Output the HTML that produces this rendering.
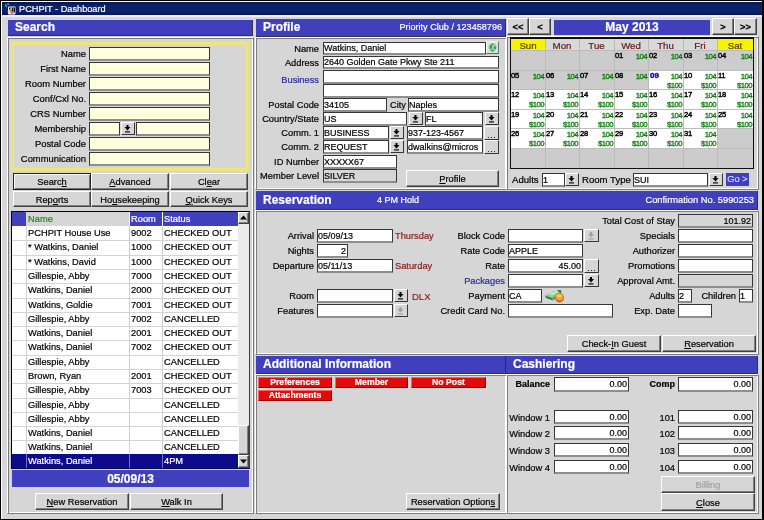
<!DOCTYPE html><html><head><meta charset="utf-8"><style>
html,body{margin:0;padding:0;width:764px;height:520px;overflow:hidden;background:#d6d6d6;font-family:"Liberation Sans", sans-serif;} body{will-change:transform;}
div{position:absolute;box-sizing:border-box;} .t{position:absolute;white-space:nowrap;font-family:"Liberation Sans",sans-serif;-webkit-text-stroke:0.2px currentColor;}
span.t{position:absolute;}
</style></head><body>
<div style="left:0px;top:0px;width:764px;height:520px;background:#000;"></div>
<div style="left:1px;top:1px;width:761px;height:518px;background:#fff;"></div>
<div style="left:2px;top:2px;width:760px;height:517px;background:#d6d6d6;"></div>
<div style="left:2px;top:2px;width:760px;height:13px;background:linear-gradient(#071650,#0b226c 30%,#0b236e 70%,#071650);"></div>
<svg style="position:absolute;left:0;top:0" width="20" height="16" viewBox="0 0 20 16"><rect x="8" y="6.5" width="7.5" height="8" rx="1" fill="#f4f4f4"/><path d="M9 7.5h2.5v1h-1.5v1h1.5v2h-2.5v-1h1.5v-1h-1.5z" fill="#111"/><path d="M12 7.5h3v5h-3z M13 8.5v1h1v-1z M13 10.5v1h1v-1z" fill="#111" fill-rule="evenodd"/><circle cx="9.3" cy="11.8" r="1.6" fill="#e8e070"/><circle cx="12" cy="12.5" r="1.6" fill="#d070a0"/><path d="M5 4l1.5 0.5l0.5 3l-1.5-1z" fill="#60b8a0"/><path d="M7 3.2l2 0.3l0.5 1.5l-2-0.3z" fill="#9080d8"/></svg>
<div class="t" style="left:19px;top:2px;height:14px;line-height:14px;font-size:9.2px;color:#fff;font-weight:normal;">PCHPIT - Dashboard</div>
<div style="left:2px;top:15px;width:760px;height:2px;background:#eeeef6;"></div>
<div style="left:8px;top:20px;width:245px;height:16px;background:#4040bf;border-right:1px solid #303040;border-bottom:1px solid #303040;"></div>
<div class="t" style="left:15px;top:19px;height:16px;line-height:16px;font-size:12px;color:#fff;font-weight:bold;">Search</div>
<div style="left:7px;top:37px;width:247px;height:477px;border:1px solid;border-color:#fff #7c7c7c #7c7c7c #fff;box-shadow:inset 1px 1px 0 #7c7c7c, inset -1px -1px 0 #fff;"></div>
<div style="left:11px;top:42px;width:238px;height:129px;border:3px solid #eee67c;"></div>
<div class="t" style="right:678px;top:47px;height:14px;line-height:14px;font-size:9.4px;color:#000;font-weight:normal;text-align:right;">Name</div>
<div style="left:89px;top:47px;width:121px;height:14px;background:#ffffe0;border-top:1px solid #363636;border-left:1px solid #363636;border-right:1px solid #363636;border-bottom:2px solid #8e8e8e;box-sizing:border-box;"></div>
<div class="t" style="right:678px;top:62px;height:14px;line-height:14px;font-size:9.4px;color:#000;font-weight:normal;text-align:right;">First Name</div>
<div style="left:89px;top:62px;width:121px;height:14px;background:#ffffe0;border-top:1px solid #363636;border-left:1px solid #363636;border-right:1px solid #363636;border-bottom:2px solid #8e8e8e;box-sizing:border-box;"></div>
<div class="t" style="right:678px;top:77px;height:14px;line-height:14px;font-size:9.4px;color:#000;font-weight:normal;text-align:right;">Room Number</div>
<div style="left:89px;top:77px;width:121px;height:14px;background:#ffffe0;border-top:1px solid #363636;border-left:1px solid #363636;border-right:1px solid #363636;border-bottom:2px solid #8e8e8e;box-sizing:border-box;"></div>
<div class="t" style="right:678px;top:92px;height:14px;line-height:14px;font-size:9.4px;color:#000;font-weight:normal;text-align:right;">Conf/Cxl No.</div>
<div style="left:89px;top:92px;width:121px;height:14px;background:#ffffe0;border-top:1px solid #363636;border-left:1px solid #363636;border-right:1px solid #363636;border-bottom:2px solid #8e8e8e;box-sizing:border-box;"></div>
<div class="t" style="right:678px;top:107px;height:14px;line-height:14px;font-size:9.4px;color:#000;font-weight:normal;text-align:right;">CRS Number</div>
<div style="left:89px;top:107px;width:121px;height:14px;background:#ffffe0;border-top:1px solid #363636;border-left:1px solid #363636;border-right:1px solid #363636;border-bottom:2px solid #8e8e8e;box-sizing:border-box;"></div>
<div class="t" style="right:678px;top:122px;height:14px;line-height:14px;font-size:9.4px;color:#000;font-weight:normal;text-align:right;">Membership</div>
<div style="left:89px;top:122px;width:31px;height:14px;background:#ffffe0;border-top:1px solid #363636;border-left:1px solid #363636;border-right:1px solid #363636;border-bottom:2px solid #8e8e8e;box-sizing:border-box;"></div>
<div style="left:121px;top:122px;width:14px;height:13px;background:#d6d6d6;box-sizing:border-box;border-top:1px solid #fff;border-left:1px solid #fff;border-right:1px solid #363636;border-bottom:1px solid #363636;"><div style="left:-1px;top:-1px;width:14px;height:13px"><svg width="14" height="14" style="position:absolute;left:0;top:0"><rect x="5.5" y="3" width="2" height="2" fill="#000"/><path d="M3.5 5 H9.5 L6.5 8.5z" fill="#000"/><rect x="4.0" y="9.2" width="5" height="1.4" fill="#000" opacity="0.8"/></svg></div></div>
<div style="left:136px;top:122px;width:74px;height:14px;background:#ffffe0;border-top:1px solid #363636;border-left:1px solid #363636;border-right:1px solid #363636;border-bottom:2px solid #8e8e8e;box-sizing:border-box;"></div>
<div class="t" style="right:678px;top:137px;height:14px;line-height:14px;font-size:9.4px;color:#000;font-weight:normal;text-align:right;">Postal Code</div>
<div style="left:89px;top:137px;width:121px;height:14px;background:#ffffe0;border-top:1px solid #363636;border-left:1px solid #363636;border-right:1px solid #363636;border-bottom:2px solid #8e8e8e;box-sizing:border-box;"></div>
<div class="t" style="right:678px;top:152px;height:14px;line-height:14px;font-size:9.4px;color:#000;font-weight:normal;text-align:right;">Communication</div>
<div style="left:89px;top:152px;width:121px;height:14px;background:#ffffe0;border-top:1px solid #363636;border-left:1px solid #363636;border-right:1px solid #363636;border-bottom:2px solid #8e8e8e;box-sizing:border-box;"></div>
<div style="left:13px;top:173px;width:78px;height:17px;background:#d6d6d6;box-sizing:border-box;border:1px solid #202020;box-shadow:inset 1px 1px 0 #fff, inset -1px -1px 0 #707070;"><div class="t" style="left:0;top:0;width:100%;height:100%;line-height:17px;text-align:center;font-size:9.3px;color:#000">Searc<u>h</u></div></div>
<div style="left:91px;top:173px;width:78px;height:17px;background:#d6d6d6;box-sizing:border-box;border-top:1px solid #fff;border-left:1px solid #fff;border-right:1px solid #404040;border-bottom:1px solid #404040;box-shadow:inset -1px -1px 0 #808080;"><div class="t" style="left:0;top:0;width:100%;height:100%;line-height:17px;text-align:center;font-size:9.3px;color:#000"><u>A</u>dvanced</div></div>
<div style="left:170px;top:173px;width:78px;height:17px;background:#d6d6d6;box-sizing:border-box;border-top:1px solid #fff;border-left:1px solid #fff;border-right:1px solid #404040;border-bottom:1px solid #404040;box-shadow:inset -1px -1px 0 #808080;"><div class="t" style="left:0;top:0;width:100%;height:100%;line-height:17px;text-align:center;font-size:9.3px;color:#000">Cl<u>e</u>ar</div></div>
<div style="left:13px;top:191px;width:78px;height:16px;background:#d6d6d6;box-sizing:border-box;border-top:1px solid #fff;border-left:1px solid #fff;border-right:1px solid #404040;border-bottom:1px solid #404040;box-shadow:inset -1px -1px 0 #808080;"><div class="t" style="left:0;top:0;width:100%;height:100%;line-height:16px;text-align:center;font-size:9.3px;color:#000">Rep<u>o</u>rts</div></div>
<div style="left:91px;top:191px;width:78px;height:16px;background:#d6d6d6;box-sizing:border-box;border-top:1px solid #fff;border-left:1px solid #fff;border-right:1px solid #404040;border-bottom:1px solid #404040;box-shadow:inset -1px -1px 0 #808080;"><div class="t" style="left:0;top:0;width:100%;height:100%;line-height:16px;text-align:center;font-size:9.3px;color:#000">Ho<u>u</u>sekeeping</div></div>
<div style="left:170px;top:191px;width:78px;height:16px;background:#d6d6d6;box-sizing:border-box;border-top:1px solid #fff;border-left:1px solid #fff;border-right:1px solid #404040;border-bottom:1px solid #404040;box-shadow:inset -1px -1px 0 #808080;"><div class="t" style="left:0;top:0;width:100%;height:100%;line-height:16px;text-align:center;font-size:9.3px;color:#000"><u>Q</u>uick Keys</div></div>
<div style="left:11px;top:211px;width:239px;height:258px;background:#fff;border:1px solid #000;border-right-color:#404040;border-bottom-color:#08084a;"></div>
<div style="left:12px;top:212px;width:14px;height:14px;background:#4040bf;"></div>
<div style="left:26px;top:212px;width:104px;height:14px;background:#d6d6d6;"></div>
<div style="left:130px;top:212px;width:108px;height:14px;background:#4040bf;"></div>
<div style="left:129px;top:212px;width:1px;height:14px;background:#fff;"></div>
<div style="left:162px;top:212px;width:1px;height:14px;background:#fff;"></div>
<div class="t" style="left:28px;top:212px;height:14px;line-height:14px;font-size:9.3px;color:#1c8a1c;font-weight:normal;">Name</div>
<div class="t" style="left:131px;top:212px;height:14px;line-height:14px;font-size:9.3px;color:#fff;font-weight:normal;">Room</div>
<div class="t" style="left:164px;top:212px;height:14px;line-height:14px;font-size:9.3px;color:#fff;font-weight:normal;">Status</div>
<div style="left:12px;top:240px;width:226px;height:1px;background:#d4d4d4;"></div>
<div class="t" style="left:28px;top:226px;height:14px;line-height:14px;font-size:9.3px;color:#000;font-weight:normal;">PCHPIT House Use</div>
<div class="t" style="left:131px;top:226px;height:14px;line-height:14px;font-size:9.3px;color:#000;font-weight:normal;">9002</div>
<div class="t" style="left:164px;top:226px;height:14px;line-height:14px;font-size:9.3px;color:#000;font-weight:normal;">CHECKED OUT</div>
<div style="left:12px;top:255px;width:226px;height:1px;background:#d4d4d4;"></div>
<div class="t" style="left:28px;top:240px;height:15px;line-height:15px;font-size:9.3px;color:#000;font-weight:normal;">* Watkins, Daniel</div>
<div class="t" style="left:131px;top:240px;height:15px;line-height:15px;font-size:9.3px;color:#000;font-weight:normal;">1000</div>
<div class="t" style="left:164px;top:240px;height:15px;line-height:15px;font-size:9.3px;color:#000;font-weight:normal;">CHECKED OUT</div>
<div style="left:12px;top:269px;width:226px;height:1px;background:#d4d4d4;"></div>
<div class="t" style="left:28px;top:255px;height:14px;line-height:14px;font-size:9.3px;color:#000;font-weight:normal;">* Watkins, David</div>
<div class="t" style="left:131px;top:255px;height:14px;line-height:14px;font-size:9.3px;color:#000;font-weight:normal;">1000</div>
<div class="t" style="left:164px;top:255px;height:14px;line-height:14px;font-size:9.3px;color:#000;font-weight:normal;">CHECKED OUT</div>
<div style="left:12px;top:283px;width:226px;height:1px;background:#d4d4d4;"></div>
<div class="t" style="left:28px;top:269px;height:14px;line-height:14px;font-size:9.3px;color:#000;font-weight:normal;">Gillespie, Abby</div>
<div class="t" style="left:131px;top:269px;height:14px;line-height:14px;font-size:9.3px;color:#000;font-weight:normal;">7000</div>
<div class="t" style="left:164px;top:269px;height:14px;line-height:14px;font-size:9.3px;color:#000;font-weight:normal;">CHECKED OUT</div>
<div style="left:12px;top:298px;width:226px;height:1px;background:#d4d4d4;"></div>
<div class="t" style="left:28px;top:283px;height:15px;line-height:15px;font-size:9.3px;color:#000;font-weight:normal;">Watkins, Daniel</div>
<div class="t" style="left:131px;top:283px;height:15px;line-height:15px;font-size:9.3px;color:#000;font-weight:normal;">2000</div>
<div class="t" style="left:164px;top:283px;height:15px;line-height:15px;font-size:9.3px;color:#000;font-weight:normal;">CHECKED OUT</div>
<div style="left:12px;top:312px;width:226px;height:1px;background:#d4d4d4;"></div>
<div class="t" style="left:28px;top:298px;height:14px;line-height:14px;font-size:9.3px;color:#000;font-weight:normal;">Watkins, Goldie</div>
<div class="t" style="left:131px;top:298px;height:14px;line-height:14px;font-size:9.3px;color:#000;font-weight:normal;">7001</div>
<div class="t" style="left:164px;top:298px;height:14px;line-height:14px;font-size:9.3px;color:#000;font-weight:normal;">CHECKED OUT</div>
<div style="left:12px;top:326px;width:226px;height:1px;background:#d4d4d4;"></div>
<div class="t" style="left:28px;top:312px;height:14px;line-height:14px;font-size:9.3px;color:#000;font-weight:normal;">Gillespie, Abby</div>
<div class="t" style="left:131px;top:312px;height:14px;line-height:14px;font-size:9.3px;color:#000;font-weight:normal;">7002</div>
<div class="t" style="left:164px;top:312px;height:14px;line-height:14px;font-size:9.3px;color:#000;font-weight:normal;">CANCELLED</div>
<div style="left:12px;top:340px;width:226px;height:1px;background:#d4d4d4;"></div>
<div class="t" style="left:28px;top:326px;height:14px;line-height:14px;font-size:9.3px;color:#000;font-weight:normal;">Watkins, Daniel</div>
<div class="t" style="left:131px;top:326px;height:14px;line-height:14px;font-size:9.3px;color:#000;font-weight:normal;">2001</div>
<div class="t" style="left:164px;top:326px;height:14px;line-height:14px;font-size:9.3px;color:#000;font-weight:normal;">CHECKED OUT</div>
<div style="left:12px;top:355px;width:226px;height:1px;background:#d4d4d4;"></div>
<div class="t" style="left:28px;top:340px;height:15px;line-height:15px;font-size:9.3px;color:#000;font-weight:normal;">Watkins, Daniel</div>
<div class="t" style="left:131px;top:340px;height:15px;line-height:15px;font-size:9.3px;color:#000;font-weight:normal;">7002</div>
<div class="t" style="left:164px;top:340px;height:15px;line-height:15px;font-size:9.3px;color:#000;font-weight:normal;">CHECKED OUT</div>
<div style="left:12px;top:369px;width:226px;height:1px;background:#d4d4d4;"></div>
<div class="t" style="left:28px;top:355px;height:14px;line-height:14px;font-size:9.3px;color:#000;font-weight:normal;">Gillespie, Abby</div>
<div class="t" style="left:131px;top:355px;height:14px;line-height:14px;font-size:9.3px;color:#000;font-weight:normal;"></div>
<div class="t" style="left:164px;top:355px;height:14px;line-height:14px;font-size:9.3px;color:#000;font-weight:normal;">CANCELLED</div>
<div style="left:12px;top:383px;width:226px;height:1px;background:#d4d4d4;"></div>
<div class="t" style="left:28px;top:369px;height:14px;line-height:14px;font-size:9.3px;color:#000;font-weight:normal;">Brown, Ryan</div>
<div class="t" style="left:131px;top:369px;height:14px;line-height:14px;font-size:9.3px;color:#000;font-weight:normal;">2001</div>
<div class="t" style="left:164px;top:369px;height:14px;line-height:14px;font-size:9.3px;color:#000;font-weight:normal;">CHECKED OUT</div>
<div style="left:12px;top:398px;width:226px;height:1px;background:#d4d4d4;"></div>
<div class="t" style="left:28px;top:383px;height:15px;line-height:15px;font-size:9.3px;color:#000;font-weight:normal;">Gillespie, Abby</div>
<div class="t" style="left:131px;top:383px;height:15px;line-height:15px;font-size:9.3px;color:#000;font-weight:normal;">7003</div>
<div class="t" style="left:164px;top:383px;height:15px;line-height:15px;font-size:9.3px;color:#000;font-weight:normal;">CHECKED OUT</div>
<div style="left:12px;top:412px;width:226px;height:1px;background:#d4d4d4;"></div>
<div class="t" style="left:28px;top:398px;height:14px;line-height:14px;font-size:9.3px;color:#000;font-weight:normal;">Gillespie, Abby</div>
<div class="t" style="left:131px;top:398px;height:14px;line-height:14px;font-size:9.3px;color:#000;font-weight:normal;"></div>
<div class="t" style="left:164px;top:398px;height:14px;line-height:14px;font-size:9.3px;color:#000;font-weight:normal;">CANCELLED</div>
<div style="left:12px;top:426px;width:226px;height:1px;background:#d4d4d4;"></div>
<div class="t" style="left:28px;top:412px;height:14px;line-height:14px;font-size:9.3px;color:#000;font-weight:normal;">Gillespie, Abby</div>
<div class="t" style="left:131px;top:412px;height:14px;line-height:14px;font-size:9.3px;color:#000;font-weight:normal;"></div>
<div class="t" style="left:164px;top:412px;height:14px;line-height:14px;font-size:9.3px;color:#000;font-weight:normal;">CANCELLED</div>
<div style="left:12px;top:440px;width:226px;height:1px;background:#d4d4d4;"></div>
<div class="t" style="left:28px;top:426px;height:14px;line-height:14px;font-size:9.3px;color:#000;font-weight:normal;">Watkins, Daniel</div>
<div class="t" style="left:131px;top:426px;height:14px;line-height:14px;font-size:9.3px;color:#000;font-weight:normal;"></div>
<div class="t" style="left:164px;top:426px;height:14px;line-height:14px;font-size:9.3px;color:#000;font-weight:normal;">CANCELLED</div>
<div style="left:12px;top:455px;width:226px;height:1px;background:#d4d4d4;"></div>
<div class="t" style="left:28px;top:440px;height:15px;line-height:15px;font-size:9.3px;color:#000;font-weight:normal;">Watkins, Daniel</div>
<div class="t" style="left:131px;top:440px;height:15px;line-height:15px;font-size:9.3px;color:#000;font-weight:normal;"></div>
<div class="t" style="left:164px;top:440px;height:15px;line-height:15px;font-size:9.3px;color:#000;font-weight:normal;">CANCELLED</div>
<div style="left:26px;top:226px;width:1px;height:229px;background:#d0d0d0;"></div>
<div style="left:129px;top:226px;width:1px;height:229px;background:#d0d0d0;"></div>
<div style="left:162px;top:226px;width:1px;height:229px;background:#d0d0d0;"></div>
<div style="left:12px;top:454px;width:226px;height:14px;background:#0b0b8c;"></div>
<div style="left:26px;top:454px;width:1px;height:14px;background:#7070d0;"></div>
<div style="left:129px;top:454px;width:1px;height:14px;background:#7070d0;"></div>
<div style="left:162px;top:454px;width:1px;height:14px;background:#7070d0;"></div>
<div class="t" style="left:28px;top:455px;height:13px;line-height:13px;font-size:9.3px;color:#fff;font-weight:normal;">Watkins, Daniel</div>
<div class="t" style="left:164px;top:455px;height:13px;line-height:13px;font-size:9.3px;color:#fff;font-weight:normal;">4PM</div>
<div style="left:238px;top:212px;width:11px;height:256px;background:#ebebeb;"></div>
<div style="left:238px;top:212px;width:11px;height:12px;background:#d6d6d6;box-sizing:border-box;border-top:1px solid #fff;border-left:1px solid #fff;border-right:1px solid #404040;border-bottom:1px solid #404040;box-shadow:inset -1px -1px 0 #808080;"></div>
<svg style="position:absolute;left:240px;top:215px" width="7" height="5"><path d="M3.5 0.5L7 4.5H0z" fill="#000"/></svg>
<div style="left:238px;top:425px;width:11px;height:30px;background:#d6d6d6;box-sizing:border-box;border-top:1px solid #fff;border-left:1px solid #fff;border-right:1px solid #404040;border-bottom:1px solid #404040;box-shadow:inset -1px -1px 0 #808080;"></div>
<div style="left:238px;top:455px;width:11px;height:13px;background:#d6d6d6;box-sizing:border-box;border-top:1px solid #fff;border-left:1px solid #fff;border-right:1px solid #404040;border-bottom:1px solid #404040;box-shadow:inset -1px -1px 0 #808080;"></div>
<svg style="position:absolute;left:240px;top:459px" width="7" height="5"><path d="M0 0.5H7L3.5 4.5z" fill="#000"/></svg>
<div style="left:12px;top:470px;width:237px;height:17px;background:#4040bf;"></div>
<div class="t" style="left:12px;top:471px;width:237px;height:17px;line-height:17px;font-size:12px;color:#fff;font-weight:bold;text-align:center;">05/09/13</div>
<div style="left:35px;top:493px;width:94px;height:17px;background:#d6d6d6;box-sizing:border-box;border-top:1px solid #fff;border-left:1px solid #fff;border-right:1px solid #404040;border-bottom:1px solid #404040;box-shadow:inset -1px -1px 0 #808080;"><div class="t" style="left:0;top:0;width:100%;height:100%;line-height:17px;text-align:center;font-size:9.3px;color:#000"><u>N</u>ew Reservation</div></div>
<div style="left:130px;top:493px;width:93px;height:17px;background:#d6d6d6;box-sizing:border-box;border-top:1px solid #fff;border-left:1px solid #fff;border-right:1px solid #404040;border-bottom:1px solid #404040;box-shadow:inset -1px -1px 0 #808080;"><div class="t" style="left:0;top:0;width:100%;height:100%;line-height:17px;text-align:center;font-size:9.3px;color:#000"><u>W</u>alk In</div></div>
<div style="left:256px;top:19px;width:250px;height:18px;background:#4040bf;border-right:1px solid #303040;border-bottom:1px solid #303040;"></div>
<div class="t" style="left:263px;top:18px;height:18px;line-height:18px;font-size:12px;color:#fff;font-weight:bold;">Profile</div>
<div class="t" style="right:262px;top:18px;height:18px;line-height:18px;font-size:9.1px;color:#fff;font-weight:normal;text-align:right;">Priority Club / 123458796</div>
<div style="left:255px;top:37px;width:252px;height:153px;border:1px solid;border-color:#fff #7c7c7c #7c7c7c #fff;box-shadow:inset 1px 1px 0 #7c7c7c, inset -1px -1px 0 #fff;"></div>
<div class="t" style="right:445px;top:43px;height:13px;line-height:13px;font-size:9.3px;color:#000;font-weight:normal;text-align:right;">Name</div>
<div class="t" style="right:445px;top:57px;height:13px;line-height:13px;font-size:9.3px;color:#000;font-weight:normal;text-align:right;">Address</div>
<div class="t" style="right:445px;top:74px;height:13px;line-height:13px;font-size:9.3px;color:#2a2aa0;font-weight:normal;text-align:right;">Business</div>
<div class="t" style="right:445px;top:99px;height:13px;line-height:13px;font-size:9.3px;color:#000;font-weight:normal;text-align:right;">Postal Code</div>
<div class="t" style="right:445px;top:113px;height:13px;line-height:13px;font-size:9.3px;color:#000;font-weight:normal;text-align:right;">Country/State</div>
<div class="t" style="right:445px;top:127px;height:13px;line-height:13px;font-size:9.3px;color:#000;font-weight:normal;text-align:right;">Comm. 1</div>
<div class="t" style="right:445px;top:141px;height:13px;line-height:13px;font-size:9.3px;color:#000;font-weight:normal;text-align:right;">Comm. 2</div>
<div class="t" style="right:445px;top:156px;height:13px;line-height:13px;font-size:9.3px;color:#000;font-weight:normal;text-align:right;">ID Number</div>
<div class="t" style="right:445px;top:170px;height:13px;line-height:13px;font-size:9.3px;color:#000;font-weight:normal;text-align:right;">Member Level</div>
<div style="left:323px;top:42px;width:163px;height:13px;background:#fff;border-top:1px solid #363636;border-left:1px solid #363636;border-right:1px solid #363636;border-bottom:2px solid #8e8e8e;box-sizing:border-box;"><span class="t" style="left:0px;top:0px;line-height:11px;font-size:9px;color:#000">Watkins, Daniel</span></div>
<div style="left:486px;top:41px;width:13px;height:13px;background:#dfe3df;border-top:1px solid #f4f4f4;border-left:1px solid #f4f4f4;border-right:1px solid #707070;border-bottom:1px solid #606060;"></div>
<svg style="position:absolute;left:487px;top:42px" width="11" height="11" viewBox="0 0 11 11"><circle cx="5.5" cy="5.5" r="4.2" fill="#8ad8a0"/><rect x="3.2" y="3.2" width="1.3" height="3.5" fill="#1c6a30"/><rect x="7.3" y="4.5" width="1.3" height="2.5" fill="#1c6a30"/><rect x="4.7" y="1.8" width="1.6" height="1.2" fill="#2c7a40"/><rect x="4.5" y="8" width="2" height="1.2" fill="#1c6a30"/></svg>
<div style="left:323px;top:56px;width:176px;height:13px;background:#fff;border-top:1px solid #363636;border-left:1px solid #363636;border-right:1px solid #363636;border-bottom:2px solid #8e8e8e;box-sizing:border-box;"><span class="t" style="left:0px;top:0px;line-height:11px;font-size:9px;color:#000">2640 Golden Gate Pkwy Ste 211</span></div>
<div style="left:323px;top:70px;width:176px;height:14px;background:#fff;border-top:1px solid #363636;border-left:1px solid #363636;border-right:1px solid #363636;border-bottom:2px solid #8e8e8e;box-sizing:border-box;"></div>
<div style="left:323px;top:84px;width:176px;height:14px;background:#fff;border-top:1px solid #363636;border-left:1px solid #363636;border-right:1px solid #363636;border-bottom:2px solid #8e8e8e;box-sizing:border-box;"></div>
<div style="left:323px;top:98px;width:64px;height:14px;background:#fff;border-top:1px solid #363636;border-left:1px solid #363636;border-right:1px solid #363636;border-bottom:2px solid #8e8e8e;box-sizing:border-box;"><span class="t" style="left:0px;top:0px;line-height:12px;font-size:9px;color:#000">34105</span></div>
<div class="t" style="right:358px;top:99px;height:13px;line-height:13px;font-size:9.3px;color:#000;font-weight:normal;text-align:right;">City</div>
<div style="left:408px;top:98px;width:91px;height:14px;background:#fff;border-top:1px solid #363636;border-left:1px solid #363636;border-right:1px solid #363636;border-bottom:2px solid #8e8e8e;box-sizing:border-box;"><span class="t" style="left:0px;top:0px;line-height:12px;font-size:9px;color:#000">Naples</span></div>
<div style="left:323px;top:112px;width:84px;height:14px;background:#fff;border-top:1px solid #363636;border-left:1px solid #363636;border-right:1px solid #363636;border-bottom:2px solid #8e8e8e;box-sizing:border-box;"><span class="t" style="left:0px;top:0px;line-height:12px;font-size:9px;color:#000">US</span></div>
<div style="left:409px;top:112px;width:14px;height:13px;background:#d6d6d6;box-sizing:border-box;border-top:1px solid #fff;border-left:1px solid #fff;border-right:1px solid #363636;border-bottom:1px solid #363636;"><div style="left:-1px;top:-1px;width:14px;height:13px"><svg width="14" height="14" style="position:absolute;left:0;top:0"><rect x="5.5" y="3" width="2" height="2" fill="#000"/><path d="M3.5 5 H9.5 L6.5 8.5z" fill="#000"/><rect x="4.0" y="9.2" width="5" height="1.4" fill="#000" opacity="0.8"/></svg></div></div>
<div style="left:425px;top:112px;width:58px;height:14px;background:#fff;border-top:1px solid #363636;border-left:1px solid #363636;border-right:1px solid #363636;border-bottom:2px solid #8e8e8e;box-sizing:border-box;"><span class="t" style="left:0px;top:0px;line-height:12px;font-size:9px;color:#000">FL</span></div>
<div style="left:485px;top:112px;width:14px;height:13px;background:#d6d6d6;box-sizing:border-box;border-top:1px solid #fff;border-left:1px solid #fff;border-right:1px solid #363636;border-bottom:1px solid #363636;"><div style="left:-1px;top:-1px;width:14px;height:13px"><svg width="14" height="14" style="position:absolute;left:0;top:0"><rect x="5.5" y="3" width="2" height="2" fill="#000"/><path d="M3.5 5 H9.5 L6.5 8.5z" fill="#000"/><rect x="4.0" y="9.2" width="5" height="1.4" fill="#000" opacity="0.8"/></svg></div></div>
<div style="left:323px;top:126px;width:66px;height:14px;background:#fff;border-top:1px solid #363636;border-left:1px solid #363636;border-right:1px solid #363636;border-bottom:2px solid #8e8e8e;box-sizing:border-box;"><span class="t" style="left:0px;top:0px;line-height:12px;font-size:9px;color:#000">BUSINESS</span></div>
<div style="left:390px;top:126px;width:14px;height:13px;background:#d6d6d6;box-sizing:border-box;border-top:1px solid #fff;border-left:1px solid #fff;border-right:1px solid #363636;border-bottom:1px solid #363636;"><div style="left:-1px;top:-1px;width:14px;height:13px"><svg width="14" height="14" style="position:absolute;left:0;top:0"><rect x="5.5" y="3" width="2" height="2" fill="#000"/><path d="M3.5 5 H9.5 L6.5 8.5z" fill="#000"/><rect x="4.0" y="9.2" width="5" height="1.4" fill="#000" opacity="0.8"/></svg></div></div>
<div style="left:407px;top:126px;width:76px;height:14px;background:#fff;border-top:1px solid #363636;border-left:1px solid #363636;border-right:1px solid #363636;border-bottom:2px solid #8e8e8e;box-sizing:border-box;"><span class="t" style="left:0px;top:0px;line-height:12px;font-size:9px;color:#000">937-123-4567</span></div>
<div style="left:484px;top:126px;width:15px;height:14px;background:#d6d6d6;box-sizing:border-box;border-top:1px solid #fff;border-left:1px solid #fff;border-right:1px solid #363636;border-bottom:1px solid #363636;"><svg width="15" height="13" style="position:absolute;left:-1px;top:-1px"><rect x="4" y="11" width="1" height="1" fill="#222"/><rect x="7" y="11" width="1" height="1" fill="#222"/><rect x="10" y="11" width="1" height="1" fill="#222"/></svg></div>
<div style="left:323px;top:140px;width:66px;height:14px;background:#fff;border-top:1px solid #363636;border-left:1px solid #363636;border-right:1px solid #363636;border-bottom:2px solid #8e8e8e;box-sizing:border-box;"><span class="t" style="left:0px;top:0px;line-height:12px;font-size:9px;color:#000">REQUEST</span></div>
<div style="left:390px;top:140px;width:14px;height:13px;background:#d6d6d6;box-sizing:border-box;border-top:1px solid #fff;border-left:1px solid #fff;border-right:1px solid #363636;border-bottom:1px solid #363636;"><div style="left:-1px;top:-1px;width:14px;height:13px"><svg width="14" height="14" style="position:absolute;left:0;top:0"><rect x="5.5" y="3" width="2" height="2" fill="#000"/><path d="M3.5 5 H9.5 L6.5 8.5z" fill="#000"/><rect x="4.0" y="9.2" width="5" height="1.4" fill="#000" opacity="0.8"/></svg></div></div>
<div style="left:407px;top:140px;width:76px;height:14px;background:#fff;border-top:1px solid #363636;border-left:1px solid #363636;border-right:1px solid #363636;border-bottom:2px solid #8e8e8e;box-sizing:border-box;"><span class="t" style="left:0px;top:0px;line-height:12px;font-size:9px;color:#000">dwalkins@micros</span></div>
<div style="left:484px;top:140px;width:15px;height:14px;background:#d6d6d6;box-sizing:border-box;border-top:1px solid #fff;border-left:1px solid #fff;border-right:1px solid #363636;border-bottom:1px solid #363636;"><svg width="15" height="13" style="position:absolute;left:-1px;top:-1px"><rect x="4" y="11" width="1" height="1" fill="#222"/><rect x="7" y="11" width="1" height="1" fill="#222"/><rect x="10" y="11" width="1" height="1" fill="#222"/></svg></div>
<div style="left:323px;top:155px;width:74px;height:14px;background:#fff;border-top:1px solid #363636;border-left:1px solid #363636;border-right:1px solid #363636;border-bottom:2px solid #8e8e8e;box-sizing:border-box;"><span class="t" style="left:0px;top:0px;line-height:12px;font-size:9px;color:#000">XXXXX67</span></div>
<div style="left:323px;top:169px;width:74px;height:14px;background:#d6d6d6;border-top:1px solid #363636;border-left:1px solid #363636;border-right:1px solid #363636;border-bottom:2px solid #8e8e8e;box-sizing:border-box;"><span class="t" style="left:0px;top:0px;line-height:12px;font-size:9px;color:#000">SILVER</span></div>
<div style="left:406px;top:170px;width:93px;height:17px;background:#d6d6d6;box-sizing:border-box;border-top:1px solid #fff;border-left:1px solid #fff;border-right:1px solid #404040;border-bottom:1px solid #404040;box-shadow:inset -1px -1px 0 #808080;"><div class="t" style="left:0;top:0;width:100%;height:100%;line-height:17px;text-align:center;font-size:9.3px;color:#000"><u>P</u>rofile</div></div>
<div style="left:507px;top:18px;width:22px;height:17px;background:#d6d6d6;box-sizing:border-box;border-top:1px solid #fff;border-left:1px solid #fff;border-right:1px solid #404040;border-bottom:1px solid #404040;box-shadow:inset -1px -1px 0 #808080;"><div class="t" style="left:0;top:0;width:100%;height:100%;line-height:17px;text-align:center;font-size:9.3px;color:#000"><b>&lt;&lt;</b></div></div>
<div style="left:529px;top:18px;width:22px;height:17px;background:#d6d6d6;box-sizing:border-box;border-top:1px solid #fff;border-left:1px solid #fff;border-right:1px solid #404040;border-bottom:1px solid #404040;box-shadow:inset -1px -1px 0 #808080;"><div class="t" style="left:0;top:0;width:100%;height:100%;line-height:17px;text-align:center;font-size:9.3px;color:#000"><b>&lt;</b></div></div>
<div style="left:554px;top:20px;width:156px;height:15px;background:#4040bf;"></div>
<div class="t" style="left:554px;top:20px;width:156px;height:15px;line-height:15px;font-size:12px;color:#fff;font-weight:bold;text-align:center;">May 2013</div>
<div style="left:712px;top:18px;width:22px;height:17px;background:#d6d6d6;box-sizing:border-box;border-top:1px solid #fff;border-left:1px solid #fff;border-right:1px solid #404040;border-bottom:1px solid #404040;box-shadow:inset -1px -1px 0 #808080;"><div class="t" style="left:0;top:0;width:100%;height:100%;line-height:17px;text-align:center;font-size:9.3px;color:#000"><b>&gt;</b></div></div>
<div style="left:734px;top:18px;width:23px;height:17px;background:#d6d6d6;box-sizing:border-box;border-top:1px solid #fff;border-left:1px solid #fff;border-right:1px solid #404040;border-bottom:1px solid #404040;box-shadow:inset -1px -1px 0 #808080;"><div class="t" style="left:0;top:0;width:100%;height:100%;line-height:17px;text-align:center;font-size:9.3px;color:#000"><b>&gt;&gt;</b></div></div>
<div style="left:506px;top:36px;width:253px;height:154px;border:1px solid;border-color:#fff #7c7c7c #7c7c7c #fff;box-shadow:inset 1px 1px 0 #7c7c7c, inset -1px -1px 0 #fff;"></div>
<div style="left:510px;top:37px;width:244px;height:132px;background:#fff;border:2px solid #101010;border-top-width:2px;border-right-width:1px;border-left-width:1px;border-bottom-width:1px;"></div>
<div style="left:511px;top:39px;width:34px;height:11px;background:#f8f400;"></div>
<div class="t" style="left:511px;top:40px;width:34px;height:11px;line-height:11px;font-size:9.7px;color:#5a3c00;font-weight:normal;text-align:center;">Sun</div>
<div style="left:545px;top:39px;width:34px;height:11px;background:#d8d8d8;"></div>
<div class="t" style="left:545px;top:40px;width:34px;height:11px;line-height:11px;font-size:9.7px;color:#6a1414;font-weight:normal;text-align:center;">Mon</div>
<div style="left:579px;top:39px;width:35px;height:11px;background:#d8d8d8;"></div>
<div class="t" style="left:579px;top:40px;width:35px;height:11px;line-height:11px;font-size:9.7px;color:#6a1414;font-weight:normal;text-align:center;">Tue</div>
<div style="left:614px;top:39px;width:34px;height:11px;background:#d8d8d8;"></div>
<div class="t" style="left:614px;top:40px;width:34px;height:11px;line-height:11px;font-size:9.7px;color:#6a1414;font-weight:normal;text-align:center;">Wed</div>
<div style="left:648px;top:39px;width:35px;height:11px;background:#d8d8d8;"></div>
<div class="t" style="left:648px;top:40px;width:35px;height:11px;line-height:11px;font-size:9.7px;color:#6a1414;font-weight:normal;text-align:center;">Thu</div>
<div style="left:683px;top:39px;width:34px;height:11px;background:#d8d8d8;"></div>
<div class="t" style="left:683px;top:40px;width:34px;height:11px;line-height:11px;font-size:9.7px;color:#6a1414;font-weight:normal;text-align:center;">Fri</div>
<div style="left:717px;top:39px;width:36px;height:11px;background:#f8f400;"></div>
<div class="t" style="left:717px;top:40px;width:36px;height:11px;line-height:11px;font-size:9.7px;color:#5a3c00;font-weight:normal;text-align:center;">Sat</div>
<div style="left:511px;top:50px;width:34px;height:20px;background:#cccccc;"></div>
<div style="left:545px;top:50px;width:34px;height:20px;background:#cccccc;"></div>
<div style="left:579px;top:50px;width:35px;height:20px;background:#cccccc;"></div>
<div style="left:614px;top:50px;width:34px;height:20px;background:#cccccc;"></div>
<div style="left:648px;top:50px;width:35px;height:20px;background:#cccccc;"></div>
<div style="left:683px;top:50px;width:34px;height:20px;background:#cccccc;"></div>
<div style="left:717px;top:50px;width:36px;height:20px;background:#cccccc;"></div>
<div style="left:511px;top:70px;width:34px;height:19px;background:#cccccc;"></div>
<div style="left:545px;top:70px;width:34px;height:19px;background:#cccccc;"></div>
<div style="left:579px;top:70px;width:35px;height:19px;background:#cccccc;"></div>
<div style="left:614px;top:70px;width:34px;height:19px;background:#cccccc;"></div>
<div style="left:648px;top:70px;width:35px;height:19px;background:#fff;"></div>
<div style="left:683px;top:70px;width:34px;height:19px;background:#fff;"></div>
<div style="left:717px;top:70px;width:36px;height:19px;background:#fff;"></div>
<div style="left:511px;top:89px;width:34px;height:20px;background:#fff;"></div>
<div style="left:545px;top:89px;width:34px;height:20px;background:#fff;"></div>
<div style="left:579px;top:89px;width:35px;height:20px;background:#fff;"></div>
<div style="left:614px;top:89px;width:34px;height:20px;background:#fff;"></div>
<div style="left:648px;top:89px;width:35px;height:20px;background:#fff;"></div>
<div style="left:683px;top:89px;width:34px;height:20px;background:#fff;"></div>
<div style="left:717px;top:89px;width:36px;height:20px;background:#fff;"></div>
<div style="left:511px;top:109px;width:34px;height:19px;background:#fff;"></div>
<div style="left:545px;top:109px;width:34px;height:19px;background:#fff;"></div>
<div style="left:579px;top:109px;width:35px;height:19px;background:#fff;"></div>
<div style="left:614px;top:109px;width:34px;height:19px;background:#fff;"></div>
<div style="left:648px;top:109px;width:35px;height:19px;background:#fff;"></div>
<div style="left:683px;top:109px;width:34px;height:19px;background:#fff;"></div>
<div style="left:717px;top:109px;width:36px;height:19px;background:#fff;"></div>
<div style="left:511px;top:128px;width:34px;height:20px;background:#fff;"></div>
<div style="left:545px;top:128px;width:34px;height:20px;background:#fff;"></div>
<div style="left:579px;top:128px;width:35px;height:20px;background:#fff;"></div>
<div style="left:614px;top:128px;width:34px;height:20px;background:#fff;"></div>
<div style="left:648px;top:128px;width:35px;height:20px;background:#fff;"></div>
<div style="left:683px;top:128px;width:34px;height:20px;background:#fff;"></div>
<div style="left:717px;top:128px;width:36px;height:20px;background:#cccccc;"></div>
<div style="left:511px;top:148px;width:34px;height:20px;background:#cccccc;"></div>
<div style="left:545px;top:148px;width:34px;height:20px;background:#cccccc;"></div>
<div style="left:579px;top:148px;width:35px;height:20px;background:#cccccc;"></div>
<div style="left:614px;top:148px;width:34px;height:20px;background:#cccccc;"></div>
<div style="left:648px;top:148px;width:35px;height:20px;background:#cccccc;"></div>
<div style="left:683px;top:148px;width:34px;height:20px;background:#cccccc;"></div>
<div style="left:717px;top:148px;width:36px;height:20px;background:#cccccc;"></div>
<div style="left:545px;top:39px;width:1px;height:129px;background:#bababa;"></div>
<div style="left:579px;top:39px;width:1px;height:129px;background:#bababa;"></div>
<div style="left:614px;top:39px;width:1px;height:129px;background:#bababa;"></div>
<div style="left:648px;top:39px;width:1px;height:129px;background:#bababa;"></div>
<div style="left:683px;top:39px;width:1px;height:129px;background:#bababa;"></div>
<div style="left:717px;top:39px;width:1px;height:129px;background:#bababa;"></div>
<div style="left:511px;top:50px;width:242px;height:1px;background:#bcbcbc;"></div>
<div style="left:511px;top:70px;width:242px;height:1px;background:#bcbcbc;"></div>
<div style="left:511px;top:89px;width:242px;height:1px;background:#bcbcbc;"></div>
<div style="left:511px;top:109px;width:242px;height:1px;background:#bcbcbc;"></div>
<div style="left:511px;top:128px;width:242px;height:1px;background:#bcbcbc;"></div>
<div style="left:511px;top:148px;width:242px;height:1px;background:#bcbcbc;"></div>
<div class="t" style="left:615px;top:51px;height:9px;line-height:9px;font-size:7.6px;color:#000;font-weight:normal;-webkit-text-stroke:0.45px #000;letter-spacing:-0.3px;">01</div>
<div class="t" style="right:117px;top:52px;height:10px;line-height:10px;font-size:7.8px;color:#067a06;font-weight:normal;text-align:right;letter-spacing:-0.6px;-webkit-text-stroke:0.28px #067a06;">104</div>
<div class="t" style="left:649px;top:51px;height:9px;line-height:9px;font-size:7.6px;color:#000;font-weight:normal;-webkit-text-stroke:0.45px #000;letter-spacing:-0.3px;">02</div>
<div class="t" style="right:82px;top:52px;height:10px;line-height:10px;font-size:7.8px;color:#067a06;font-weight:normal;text-align:right;letter-spacing:-0.6px;-webkit-text-stroke:0.28px #067a06;">104</div>
<div class="t" style="left:684px;top:51px;height:9px;line-height:9px;font-size:7.6px;color:#000;font-weight:normal;-webkit-text-stroke:0.45px #000;letter-spacing:-0.3px;">03</div>
<div class="t" style="right:48px;top:52px;height:10px;line-height:10px;font-size:7.8px;color:#067a06;font-weight:normal;text-align:right;letter-spacing:-0.6px;-webkit-text-stroke:0.28px #067a06;">104</div>
<div class="t" style="left:718px;top:51px;height:9px;line-height:9px;font-size:7.6px;color:#000;font-weight:normal;-webkit-text-stroke:0.45px #000;letter-spacing:-0.3px;">04</div>
<div class="t" style="right:12px;top:52px;height:10px;line-height:10px;font-size:7.8px;color:#067a06;font-weight:normal;text-align:right;letter-spacing:-0.6px;-webkit-text-stroke:0.28px #067a06;">104</div>
<div class="t" style="left:511px;top:71px;height:9px;line-height:9px;font-size:7.6px;color:#000;font-weight:normal;-webkit-text-stroke:0.45px #000;letter-spacing:-0.3px;">05</div>
<div class="t" style="right:220px;top:72px;height:10px;line-height:10px;font-size:7.8px;color:#067a06;font-weight:normal;text-align:right;letter-spacing:-0.6px;-webkit-text-stroke:0.28px #067a06;">104</div>
<div class="t" style="left:546px;top:71px;height:9px;line-height:9px;font-size:7.6px;color:#000;font-weight:normal;-webkit-text-stroke:0.45px #000;letter-spacing:-0.3px;">06</div>
<div class="t" style="right:186px;top:72px;height:10px;line-height:10px;font-size:7.8px;color:#067a06;font-weight:normal;text-align:right;letter-spacing:-0.6px;-webkit-text-stroke:0.28px #067a06;">104</div>
<div class="t" style="left:580px;top:71px;height:9px;line-height:9px;font-size:7.6px;color:#000;font-weight:normal;-webkit-text-stroke:0.45px #000;letter-spacing:-0.3px;">07</div>
<div class="t" style="right:151px;top:72px;height:10px;line-height:10px;font-size:7.8px;color:#067a06;font-weight:normal;text-align:right;letter-spacing:-0.6px;-webkit-text-stroke:0.28px #067a06;">104</div>
<div class="t" style="left:615px;top:71px;height:9px;line-height:9px;font-size:7.6px;color:#000;font-weight:normal;-webkit-text-stroke:0.45px #000;letter-spacing:-0.3px;">08</div>
<div class="t" style="right:117px;top:72px;height:10px;line-height:10px;font-size:7.8px;color:#067a06;font-weight:normal;text-align:right;letter-spacing:-0.6px;-webkit-text-stroke:0.28px #067a06;">104</div>
<div class="t" style="left:650px;top:71px;height:10px;line-height:10px;font-size:8px;color:#0a0ab8;font-weight:bold;-webkit-text-stroke:0.45px #0a0ab8;">09</div>
<div class="t" style="right:82px;top:72px;height:10px;line-height:10px;font-size:7.8px;color:#067a06;font-weight:normal;text-align:right;letter-spacing:-0.6px;-webkit-text-stroke:0.28px #067a06;">104</div>
<div class="t" style="right:82px;top:81px;height:10px;line-height:10px;font-size:7.8px;color:#067a06;font-weight:normal;text-align:right;letter-spacing:-0.6px;-webkit-text-stroke:0.28px #067a06;">$100</div>
<div class="t" style="left:684px;top:71px;height:9px;line-height:9px;font-size:7.6px;color:#000;font-weight:normal;-webkit-text-stroke:0.45px #000;letter-spacing:-0.3px;">10</div>
<div class="t" style="right:48px;top:72px;height:10px;line-height:10px;font-size:7.8px;color:#067a06;font-weight:normal;text-align:right;letter-spacing:-0.6px;-webkit-text-stroke:0.28px #067a06;">104</div>
<div class="t" style="right:48px;top:81px;height:10px;line-height:10px;font-size:7.8px;color:#067a06;font-weight:normal;text-align:right;letter-spacing:-0.6px;-webkit-text-stroke:0.28px #067a06;">$100</div>
<div class="t" style="left:718px;top:71px;height:9px;line-height:9px;font-size:7.6px;color:#000;font-weight:normal;-webkit-text-stroke:0.45px #000;letter-spacing:-0.3px;">11</div>
<div class="t" style="right:12px;top:72px;height:10px;line-height:10px;font-size:7.8px;color:#067a06;font-weight:normal;text-align:right;letter-spacing:-0.6px;-webkit-text-stroke:0.28px #067a06;">104</div>
<div class="t" style="right:12px;top:81px;height:10px;line-height:10px;font-size:7.8px;color:#067a06;font-weight:normal;text-align:right;letter-spacing:-0.6px;-webkit-text-stroke:0.28px #067a06;">$100</div>
<div class="t" style="left:511px;top:90px;height:9px;line-height:9px;font-size:7.6px;color:#000;font-weight:normal;-webkit-text-stroke:0.45px #000;letter-spacing:-0.3px;">12</div>
<div class="t" style="right:220px;top:91px;height:10px;line-height:10px;font-size:7.8px;color:#067a06;font-weight:normal;text-align:right;letter-spacing:-0.6px;-webkit-text-stroke:0.28px #067a06;">104</div>
<div class="t" style="right:220px;top:100px;height:10px;line-height:10px;font-size:7.8px;color:#067a06;font-weight:normal;text-align:right;letter-spacing:-0.6px;-webkit-text-stroke:0.28px #067a06;">$100</div>
<div class="t" style="left:546px;top:90px;height:9px;line-height:9px;font-size:7.6px;color:#000;font-weight:normal;-webkit-text-stroke:0.45px #000;letter-spacing:-0.3px;">13</div>
<div class="t" style="right:186px;top:91px;height:10px;line-height:10px;font-size:7.8px;color:#067a06;font-weight:normal;text-align:right;letter-spacing:-0.6px;-webkit-text-stroke:0.28px #067a06;">104</div>
<div class="t" style="right:186px;top:100px;height:10px;line-height:10px;font-size:7.8px;color:#067a06;font-weight:normal;text-align:right;letter-spacing:-0.6px;-webkit-text-stroke:0.28px #067a06;">$100</div>
<div class="t" style="left:580px;top:90px;height:9px;line-height:9px;font-size:7.6px;color:#000;font-weight:normal;-webkit-text-stroke:0.45px #000;letter-spacing:-0.3px;">14</div>
<div class="t" style="right:151px;top:91px;height:10px;line-height:10px;font-size:7.8px;color:#067a06;font-weight:normal;text-align:right;letter-spacing:-0.6px;-webkit-text-stroke:0.28px #067a06;">104</div>
<div class="t" style="right:151px;top:100px;height:10px;line-height:10px;font-size:7.8px;color:#067a06;font-weight:normal;text-align:right;letter-spacing:-0.6px;-webkit-text-stroke:0.28px #067a06;">$100</div>
<div class="t" style="left:615px;top:90px;height:9px;line-height:9px;font-size:7.6px;color:#000;font-weight:normal;-webkit-text-stroke:0.45px #000;letter-spacing:-0.3px;">15</div>
<div class="t" style="right:117px;top:91px;height:10px;line-height:10px;font-size:7.8px;color:#067a06;font-weight:normal;text-align:right;letter-spacing:-0.6px;-webkit-text-stroke:0.28px #067a06;">104</div>
<div class="t" style="right:117px;top:100px;height:10px;line-height:10px;font-size:7.8px;color:#067a06;font-weight:normal;text-align:right;letter-spacing:-0.6px;-webkit-text-stroke:0.28px #067a06;">$100</div>
<div class="t" style="left:649px;top:90px;height:9px;line-height:9px;font-size:7.6px;color:#000;font-weight:normal;-webkit-text-stroke:0.45px #000;letter-spacing:-0.3px;">16</div>
<div class="t" style="right:82px;top:91px;height:10px;line-height:10px;font-size:7.8px;color:#067a06;font-weight:normal;text-align:right;letter-spacing:-0.6px;-webkit-text-stroke:0.28px #067a06;">104</div>
<div class="t" style="right:82px;top:100px;height:10px;line-height:10px;font-size:7.8px;color:#067a06;font-weight:normal;text-align:right;letter-spacing:-0.6px;-webkit-text-stroke:0.28px #067a06;">$100</div>
<div class="t" style="left:684px;top:90px;height:9px;line-height:9px;font-size:7.6px;color:#000;font-weight:normal;-webkit-text-stroke:0.45px #000;letter-spacing:-0.3px;">17</div>
<div class="t" style="right:48px;top:91px;height:10px;line-height:10px;font-size:7.8px;color:#067a06;font-weight:normal;text-align:right;letter-spacing:-0.6px;-webkit-text-stroke:0.28px #067a06;">104</div>
<div class="t" style="right:48px;top:100px;height:10px;line-height:10px;font-size:7.8px;color:#067a06;font-weight:normal;text-align:right;letter-spacing:-0.6px;-webkit-text-stroke:0.28px #067a06;">$100</div>
<div class="t" style="left:718px;top:90px;height:9px;line-height:9px;font-size:7.6px;color:#000;font-weight:normal;-webkit-text-stroke:0.45px #000;letter-spacing:-0.3px;">18</div>
<div class="t" style="right:12px;top:91px;height:10px;line-height:10px;font-size:7.8px;color:#067a06;font-weight:normal;text-align:right;letter-spacing:-0.6px;-webkit-text-stroke:0.28px #067a06;">104</div>
<div class="t" style="right:12px;top:100px;height:10px;line-height:10px;font-size:7.8px;color:#067a06;font-weight:normal;text-align:right;letter-spacing:-0.6px;-webkit-text-stroke:0.28px #067a06;">$100</div>
<div class="t" style="left:511px;top:110px;height:9px;line-height:9px;font-size:7.6px;color:#000;font-weight:normal;-webkit-text-stroke:0.45px #000;letter-spacing:-0.3px;">19</div>
<div class="t" style="right:220px;top:111px;height:10px;line-height:10px;font-size:7.8px;color:#067a06;font-weight:normal;text-align:right;letter-spacing:-0.6px;-webkit-text-stroke:0.28px #067a06;">104</div>
<div class="t" style="right:220px;top:120px;height:10px;line-height:10px;font-size:7.8px;color:#067a06;font-weight:normal;text-align:right;letter-spacing:-0.6px;-webkit-text-stroke:0.28px #067a06;">$100</div>
<div class="t" style="left:546px;top:110px;height:9px;line-height:9px;font-size:7.6px;color:#000;font-weight:normal;-webkit-text-stroke:0.45px #000;letter-spacing:-0.3px;">20</div>
<div class="t" style="right:186px;top:111px;height:10px;line-height:10px;font-size:7.8px;color:#067a06;font-weight:normal;text-align:right;letter-spacing:-0.6px;-webkit-text-stroke:0.28px #067a06;">104</div>
<div class="t" style="right:186px;top:120px;height:10px;line-height:10px;font-size:7.8px;color:#067a06;font-weight:normal;text-align:right;letter-spacing:-0.6px;-webkit-text-stroke:0.28px #067a06;">$100</div>
<div class="t" style="left:580px;top:110px;height:9px;line-height:9px;font-size:7.6px;color:#000;font-weight:normal;-webkit-text-stroke:0.45px #000;letter-spacing:-0.3px;">21</div>
<div class="t" style="right:151px;top:111px;height:10px;line-height:10px;font-size:7.8px;color:#067a06;font-weight:normal;text-align:right;letter-spacing:-0.6px;-webkit-text-stroke:0.28px #067a06;">104</div>
<div class="t" style="right:151px;top:120px;height:10px;line-height:10px;font-size:7.8px;color:#067a06;font-weight:normal;text-align:right;letter-spacing:-0.6px;-webkit-text-stroke:0.28px #067a06;">$100</div>
<div class="t" style="left:615px;top:110px;height:9px;line-height:9px;font-size:7.6px;color:#000;font-weight:normal;-webkit-text-stroke:0.45px #000;letter-spacing:-0.3px;">22</div>
<div class="t" style="right:117px;top:111px;height:10px;line-height:10px;font-size:7.8px;color:#067a06;font-weight:normal;text-align:right;letter-spacing:-0.6px;-webkit-text-stroke:0.28px #067a06;">104</div>
<div class="t" style="right:117px;top:120px;height:10px;line-height:10px;font-size:7.8px;color:#067a06;font-weight:normal;text-align:right;letter-spacing:-0.6px;-webkit-text-stroke:0.28px #067a06;">$100</div>
<div class="t" style="left:649px;top:110px;height:9px;line-height:9px;font-size:7.6px;color:#000;font-weight:normal;-webkit-text-stroke:0.45px #000;letter-spacing:-0.3px;">23</div>
<div class="t" style="right:82px;top:111px;height:10px;line-height:10px;font-size:7.8px;color:#067a06;font-weight:normal;text-align:right;letter-spacing:-0.6px;-webkit-text-stroke:0.28px #067a06;">104</div>
<div class="t" style="right:82px;top:120px;height:10px;line-height:10px;font-size:7.8px;color:#067a06;font-weight:normal;text-align:right;letter-spacing:-0.6px;-webkit-text-stroke:0.28px #067a06;">$100</div>
<div class="t" style="left:684px;top:110px;height:9px;line-height:9px;font-size:7.6px;color:#000;font-weight:normal;-webkit-text-stroke:0.45px #000;letter-spacing:-0.3px;">24</div>
<div class="t" style="right:48px;top:111px;height:10px;line-height:10px;font-size:7.8px;color:#067a06;font-weight:normal;text-align:right;letter-spacing:-0.6px;-webkit-text-stroke:0.28px #067a06;">104</div>
<div class="t" style="right:48px;top:120px;height:10px;line-height:10px;font-size:7.8px;color:#067a06;font-weight:normal;text-align:right;letter-spacing:-0.6px;-webkit-text-stroke:0.28px #067a06;">$100</div>
<div class="t" style="left:718px;top:110px;height:9px;line-height:9px;font-size:7.6px;color:#000;font-weight:normal;-webkit-text-stroke:0.45px #000;letter-spacing:-0.3px;">25</div>
<div class="t" style="right:12px;top:111px;height:10px;line-height:10px;font-size:7.8px;color:#067a06;font-weight:normal;text-align:right;letter-spacing:-0.6px;-webkit-text-stroke:0.28px #067a06;">104</div>
<div class="t" style="right:12px;top:120px;height:10px;line-height:10px;font-size:7.8px;color:#067a06;font-weight:normal;text-align:right;letter-spacing:-0.6px;-webkit-text-stroke:0.28px #067a06;">$100</div>
<div class="t" style="left:511px;top:129px;height:9px;line-height:9px;font-size:7.6px;color:#000;font-weight:normal;-webkit-text-stroke:0.45px #000;letter-spacing:-0.3px;">26</div>
<div class="t" style="right:220px;top:130px;height:10px;line-height:10px;font-size:7.8px;color:#067a06;font-weight:normal;text-align:right;letter-spacing:-0.6px;-webkit-text-stroke:0.28px #067a06;">104</div>
<div class="t" style="right:220px;top:139px;height:10px;line-height:10px;font-size:7.8px;color:#067a06;font-weight:normal;text-align:right;letter-spacing:-0.6px;-webkit-text-stroke:0.28px #067a06;">$100</div>
<div class="t" style="left:546px;top:129px;height:9px;line-height:9px;font-size:7.6px;color:#000;font-weight:normal;-webkit-text-stroke:0.45px #000;letter-spacing:-0.3px;">27</div>
<div class="t" style="right:186px;top:130px;height:10px;line-height:10px;font-size:7.8px;color:#067a06;font-weight:normal;text-align:right;letter-spacing:-0.6px;-webkit-text-stroke:0.28px #067a06;">104</div>
<div class="t" style="right:186px;top:139px;height:10px;line-height:10px;font-size:7.8px;color:#067a06;font-weight:normal;text-align:right;letter-spacing:-0.6px;-webkit-text-stroke:0.28px #067a06;">$100</div>
<div class="t" style="left:580px;top:129px;height:9px;line-height:9px;font-size:7.6px;color:#000;font-weight:normal;-webkit-text-stroke:0.45px #000;letter-spacing:-0.3px;">28</div>
<div class="t" style="right:151px;top:130px;height:10px;line-height:10px;font-size:7.8px;color:#067a06;font-weight:normal;text-align:right;letter-spacing:-0.6px;-webkit-text-stroke:0.28px #067a06;">104</div>
<div class="t" style="right:151px;top:139px;height:10px;line-height:10px;font-size:7.8px;color:#067a06;font-weight:normal;text-align:right;letter-spacing:-0.6px;-webkit-text-stroke:0.28px #067a06;">$100</div>
<div class="t" style="left:615px;top:129px;height:9px;line-height:9px;font-size:7.6px;color:#000;font-weight:normal;-webkit-text-stroke:0.45px #000;letter-spacing:-0.3px;">29</div>
<div class="t" style="right:117px;top:130px;height:10px;line-height:10px;font-size:7.8px;color:#067a06;font-weight:normal;text-align:right;letter-spacing:-0.6px;-webkit-text-stroke:0.28px #067a06;">104</div>
<div class="t" style="right:117px;top:139px;height:10px;line-height:10px;font-size:7.8px;color:#067a06;font-weight:normal;text-align:right;letter-spacing:-0.6px;-webkit-text-stroke:0.28px #067a06;">$100</div>
<div class="t" style="left:649px;top:129px;height:9px;line-height:9px;font-size:7.6px;color:#000;font-weight:normal;-webkit-text-stroke:0.45px #000;letter-spacing:-0.3px;">30</div>
<div class="t" style="right:82px;top:130px;height:10px;line-height:10px;font-size:7.8px;color:#067a06;font-weight:normal;text-align:right;letter-spacing:-0.6px;-webkit-text-stroke:0.28px #067a06;">104</div>
<div class="t" style="right:82px;top:139px;height:10px;line-height:10px;font-size:7.8px;color:#067a06;font-weight:normal;text-align:right;letter-spacing:-0.6px;-webkit-text-stroke:0.28px #067a06;">$100</div>
<div class="t" style="left:684px;top:129px;height:9px;line-height:9px;font-size:7.6px;color:#000;font-weight:normal;-webkit-text-stroke:0.45px #000;letter-spacing:-0.3px;">31</div>
<div class="t" style="right:48px;top:130px;height:10px;line-height:10px;font-size:7.8px;color:#067a06;font-weight:normal;text-align:right;letter-spacing:-0.6px;-webkit-text-stroke:0.28px #067a06;">104</div>
<div class="t" style="right:48px;top:139px;height:10px;line-height:10px;font-size:7.8px;color:#067a06;font-weight:normal;text-align:right;letter-spacing:-0.6px;-webkit-text-stroke:0.28px #067a06;">$100</div>
<div class="t" style="left:512px;top:173px;height:14px;line-height:14px;font-size:9.6px;color:#000;font-weight:normal;">Adults</div>
<div style="left:542px;top:173px;width:23px;height:14px;background:#fff;border-top:1px solid #363636;border-left:1px solid #363636;border-right:1px solid #363636;border-bottom:2px solid #8e8e8e;box-sizing:border-box;"><span class="t" style="left:0px;top:0px;line-height:12px;font-size:9px;color:#000">1</span></div>
<div style="left:565px;top:173px;width:14px;height:13px;background:#d6d6d6;box-sizing:border-box;border-top:1px solid #fff;border-left:1px solid #fff;border-right:1px solid #363636;border-bottom:1px solid #363636;"><div style="left:-1px;top:-1px;width:14px;height:13px"><svg width="14" height="14" style="position:absolute;left:0;top:0"><rect x="5.5" y="3" width="2" height="2" fill="#000"/><path d="M3.5 5 H9.5 L6.5 8.5z" fill="#000"/><rect x="4.0" y="9.2" width="5" height="1.4" fill="#000" opacity="0.8"/></svg></div></div>
<div class="t" style="left:582px;top:173px;height:14px;line-height:14px;font-size:9.6px;color:#000;font-weight:normal;">Room Type</div>
<div style="left:633px;top:173px;width:75px;height:14px;background:#fff;border-top:1px solid #363636;border-left:1px solid #363636;border-right:1px solid #363636;border-bottom:2px solid #8e8e8e;box-sizing:border-box;"><span class="t" style="left:0px;top:0px;line-height:12px;font-size:9px;color:#000">SUI</span></div>
<div style="left:709px;top:173px;width:14px;height:13px;background:#d6d6d6;box-sizing:border-box;border-top:1px solid #fff;border-left:1px solid #fff;border-right:1px solid #363636;border-bottom:1px solid #363636;"><div style="left:-1px;top:-1px;width:14px;height:13px"><svg width="14" height="14" style="position:absolute;left:0;top:0"><rect x="5.5" y="3" width="2" height="2" fill="#000"/><path d="M3.5 5 H9.5 L6.5 8.5z" fill="#000"/><rect x="4.0" y="9.2" width="5" height="1.4" fill="#000" opacity="0.8"/></svg></div></div>
<div style="left:726px;top:173px;width:23px;height:13px;background:#4040bf;"></div>
<div class="t" style="left:726px;top:173px;width:23px;height:13px;line-height:13px;font-size:9.3px;color:#d8d8ff;font-weight:normal;text-align:center;">Go &gt;</div>
<div style="left:256px;top:191px;width:502px;height:19px;background:#4040bf;border-right:1px solid #303040;border-bottom:1px solid #303040;"></div>
<div class="t" style="left:263px;top:191px;height:19px;line-height:19px;font-size:12px;color:#fff;font-weight:bold;">Reservation</div>
<div class="t" style="left:377px;top:192px;height:17px;line-height:17px;font-size:9px;color:#fff;font-weight:normal;">4 PM Hold</div>
<div class="t" style="right:10px;top:192px;height:17px;line-height:17px;font-size:9.3px;color:#fff;font-weight:normal;text-align:right;">Confirmation No. 5990253</div>
<div style="left:255px;top:210px;width:504px;height:145px;border:1px solid;border-color:#fff #7c7c7c #7c7c7c #fff;box-shadow:inset 1px 1px 0 #7c7c7c, inset -1px -1px 0 #fff;"></div>
<div class="t" style="right:450px;top:230px;height:13px;line-height:13px;font-size:9.3px;color:#000;font-weight:normal;text-align:right;">Arrival</div>
<div class="t" style="right:450px;top:245px;height:13px;line-height:13px;font-size:9.3px;color:#000;font-weight:normal;text-align:right;">Nights</div>
<div class="t" style="right:450px;top:260px;height:13px;line-height:13px;font-size:9.3px;color:#000;font-weight:normal;text-align:right;">Departure</div>
<div class="t" style="right:450px;top:290px;height:13px;line-height:13px;font-size:9.3px;color:#000;font-weight:normal;text-align:right;">Room</div>
<div class="t" style="right:450px;top:305px;height:13px;line-height:13px;font-size:9.3px;color:#000;font-weight:normal;text-align:right;">Features</div>
<div style="left:317px;top:229px;width:76px;height:14px;background:#fff;border-top:1px solid #363636;border-left:1px solid #363636;border-right:1px solid #363636;border-bottom:2px solid #8e8e8e;box-sizing:border-box;"><span class="t" style="left:0px;top:0px;line-height:12px;font-size:9px;color:#000">05/09/13</span></div>
<div class="t" style="left:395px;top:230px;height:13px;line-height:13px;font-size:9.3px;color:#8b1a1a;font-weight:normal;">Thursday</div>
<div style="left:317px;top:244px;width:31px;height:14px;background:#fff;border-top:1px solid #363636;border-left:1px solid #363636;border-right:1px solid #363636;border-bottom:2px solid #8e8e8e;box-sizing:border-box;"><span class="t" style="right:1px;top:0px;line-height:12px;font-size:9px;color:#000">2</span></div>
<div style="left:317px;top:259px;width:76px;height:14px;background:#fff;border-top:1px solid #363636;border-left:1px solid #363636;border-right:1px solid #363636;border-bottom:2px solid #8e8e8e;box-sizing:border-box;"><span class="t" style="left:0px;top:0px;line-height:12px;font-size:9px;color:#000">05/11/13</span></div>
<div class="t" style="left:395px;top:260px;height:13px;line-height:13px;font-size:9.3px;color:#8b1a1a;font-weight:normal;">Saturday</div>
<div style="left:317px;top:289px;width:76px;height:14px;background:#fff;border-top:1px solid #363636;border-left:1px solid #363636;border-right:1px solid #363636;border-bottom:2px solid #8e8e8e;box-sizing:border-box;"></div>
<div style="left:394px;top:289px;width:14px;height:13px;background:#d6d6d6;box-sizing:border-box;border-top:1px solid #fff;border-left:1px solid #fff;border-right:1px solid #363636;border-bottom:1px solid #363636;"><div style="left:-1px;top:-1px;width:14px;height:13px"><svg width="14" height="14" style="position:absolute;left:0;top:0"><rect x="5.5" y="3" width="2" height="2" fill="#000"/><path d="M3.5 5 H9.5 L6.5 8.5z" fill="#000"/><rect x="4.0" y="9.2" width="5" height="1.4" fill="#000" opacity="0.8"/></svg></div></div>
<div class="t" style="left:412px;top:290px;height:13px;line-height:13px;font-size:9.5px;color:#8b1a1a;font-weight:normal;">DLX</div>
<div style="left:317px;top:304px;width:76px;height:14px;background:#fff;border-top:1px solid #363636;border-left:1px solid #363636;border-right:1px solid #363636;border-bottom:2px solid #8e8e8e;box-sizing:border-box;"></div>
<div style="left:394px;top:304px;width:14px;height:13px;background:#d6d6d6;box-sizing:border-box;border-top:1px solid #fff;border-left:1px solid #fff;border-right:1px solid #363636;border-bottom:1px solid #363636;"><div style="left:-1px;top:-1px;width:14px;height:13px"><svg width="14" height="14" style="position:absolute;left:0;top:0"><rect x="5.5" y="3" width="2" height="2" fill="#a0a0a0"/><path d="M3.5 5 H9.5 L6.5 8.5z" fill="#a0a0a0"/><rect x="4.0" y="9.2" width="5" height="1.4" fill="#a0a0a0" opacity="0.8"/></svg></div></div>
<div class="t" style="right:259px;top:230px;height:13px;line-height:13px;font-size:9.3px;color:#000;font-weight:normal;text-align:right;">Block Code</div>
<div class="t" style="right:259px;top:245px;height:13px;line-height:13px;font-size:9.3px;color:#000;font-weight:normal;text-align:right;">Rate Code</div>
<div class="t" style="right:259px;top:260px;height:13px;line-height:13px;font-size:9.3px;color:#000;font-weight:normal;text-align:right;">Rate</div>
<div class="t" style="right:259px;top:275px;height:13px;line-height:13px;font-size:9.3px;color:#2a2aa0;font-weight:normal;text-align:right;">Packages</div>
<div class="t" style="right:259px;top:290px;height:13px;line-height:13px;font-size:9.3px;color:#000;font-weight:normal;text-align:right;">Payment</div>
<div class="t" style="right:259px;top:305px;height:13px;line-height:13px;font-size:9.3px;color:#000;font-weight:normal;text-align:right;">Credit Card No.</div>
<div style="left:508px;top:229px;width:75px;height:14px;background:#fff;border-top:1px solid #363636;border-left:1px solid #363636;border-right:1px solid #363636;border-bottom:2px solid #8e8e8e;box-sizing:border-box;"></div>
<div style="left:584px;top:229px;width:15px;height:13px;background:#d6d6d6;box-sizing:border-box;border-top:1px solid #fff;border-left:1px solid #fff;border-right:1px solid #363636;border-bottom:1px solid #363636;"><div style="left:-1px;top:-1px;width:15px;height:13px"><svg width="15" height="14" style="position:absolute;left:0;top:0"><rect x="6.0" y="3" width="2" height="2" fill="#a0a0a0"/><path d="M4.0 5 H10.0 L7.0 8.5z" fill="#a0a0a0"/><rect x="4.5" y="9.2" width="5" height="1.4" fill="#a0a0a0" opacity="0.8"/></svg></div></div>
<div style="left:508px;top:244px;width:75px;height:14px;background:#fff;border-top:1px solid #363636;border-left:1px solid #363636;border-right:1px solid #363636;border-bottom:2px solid #8e8e8e;box-sizing:border-box;"><span class="t" style="left:0px;top:0px;line-height:12px;font-size:9px;color:#000">APPLE</span></div>
<div style="left:508px;top:259px;width:75px;height:14px;background:#fff;border-top:1px solid #363636;border-left:1px solid #363636;border-right:1px solid #363636;border-bottom:2px solid #8e8e8e;box-sizing:border-box;"><span class="t" style="right:1px;top:0px;line-height:12px;font-size:9px;color:#000">45.00</span></div>
<div style="left:584px;top:259px;width:15px;height:14px;background:#d6d6d6;box-sizing:border-box;border-top:1px solid #fff;border-left:1px solid #fff;border-right:1px solid #363636;border-bottom:1px solid #363636;"><svg width="15" height="13" style="position:absolute;left:-1px;top:-1px"><rect x="4" y="11" width="1" height="1" fill="#222"/><rect x="7" y="11" width="1" height="1" fill="#222"/><rect x="10" y="11" width="1" height="1" fill="#222"/></svg></div>
<div style="left:508px;top:274px;width:75px;height:14px;background:#fff;border-top:1px solid #363636;border-left:1px solid #363636;border-right:1px solid #363636;border-bottom:2px solid #8e8e8e;box-sizing:border-box;"></div>
<div style="left:584px;top:274px;width:15px;height:13px;background:#d6d6d6;box-sizing:border-box;border-top:1px solid #fff;border-left:1px solid #fff;border-right:1px solid #363636;border-bottom:1px solid #363636;"><div style="left:-1px;top:-1px;width:15px;height:13px"><svg width="15" height="14" style="position:absolute;left:0;top:0"><rect x="6.0" y="3" width="2" height="2" fill="#000"/><path d="M4.0 5 H10.0 L7.0 8.5z" fill="#000"/><rect x="4.5" y="9.2" width="5" height="1.4" fill="#000" opacity="0.8"/></svg></div></div>
<div style="left:508px;top:289px;width:34px;height:14px;background:#fff;border-top:1px solid #363636;border-left:1px solid #363636;border-right:1px solid #363636;border-bottom:2px solid #8e8e8e;box-sizing:border-box;"><span class="t" style="left:0px;top:0px;line-height:12px;font-size:9px;color:#000">CA</span></div>
<svg style="position:absolute;left:544px;top:289px" width="22" height="14" viewBox="0 0 22 14"><path d="M1 6.5 L11 2 L17 3 L8 9z" fill="#8ccc98"/><path d="M1 6.5 L8 9 L9 11.5 L2 9z" fill="#3a7a4a"/><path d="M8 9 L17 3 L17.5 5 L9 11.5z" fill="#5a9a68"/><path d="M5 5.2 L12 2.3 L15 2.8 L8 6.2z" fill="#c8ecc8"/><path d="M13 0.8 L17.5 1.5 L16.5 4.5 z" fill="#2c6a3c"/><circle cx="15.5" cy="8.8" r="4.6" fill="#b85c10"/><ellipse cx="15.5" cy="8" rx="4.1" ry="3.8" fill="#eea030"/><ellipse cx="15" cy="7" rx="2.6" ry="1.7" fill="#f8c860"/></svg>
<div style="left:508px;top:304px;width:105px;height:14px;background:#fff;border-top:1px solid #363636;border-left:1px solid #363636;border-right:1px solid #363636;border-bottom:2px solid #8e8e8e;box-sizing:border-box;"></div>
<div class="t" style="right:89px;top:215px;height:13px;line-height:13px;font-size:9.3px;color:#000;font-weight:normal;text-align:right;">Total Cost of Stay</div>
<div class="t" style="right:89px;top:230px;height:13px;line-height:13px;font-size:9.3px;color:#000;font-weight:normal;text-align:right;">Specials</div>
<div class="t" style="right:89px;top:245px;height:13px;line-height:13px;font-size:9.3px;color:#000;font-weight:normal;text-align:right;">Authorizer</div>
<div class="t" style="right:89px;top:260px;height:13px;line-height:13px;font-size:9.3px;color:#000;font-weight:normal;text-align:right;">Promotions</div>
<div class="t" style="right:89px;top:275px;height:13px;line-height:13px;font-size:9.3px;color:#000;font-weight:normal;text-align:right;">Approval Amt.</div>
<div class="t" style="right:89px;top:290px;height:13px;line-height:13px;font-size:9.3px;color:#000;font-weight:normal;text-align:right;">Adults</div>
<div class="t" style="right:89px;top:305px;height:13px;line-height:13px;font-size:9.3px;color:#000;font-weight:normal;text-align:right;">Exp. Date</div>
<div style="left:678px;top:214px;width:75px;height:14px;background:#d6d6d6;border-top:1px solid #363636;border-left:1px solid #363636;border-right:1px solid #363636;border-bottom:2px solid #8e8e8e;box-sizing:border-box;"><span class="t" style="right:1px;top:0px;line-height:12px;font-size:9px;color:#000">101.92</span></div>
<div style="left:678px;top:229px;width:75px;height:14px;background:#fff;border-top:1px solid #363636;border-left:1px solid #363636;border-right:1px solid #363636;border-bottom:2px solid #8e8e8e;box-sizing:border-box;"></div>
<div style="left:678px;top:244px;width:75px;height:14px;background:#fff;border-top:1px solid #363636;border-left:1px solid #363636;border-right:1px solid #363636;border-bottom:2px solid #8e8e8e;box-sizing:border-box;"></div>
<div style="left:678px;top:259px;width:75px;height:14px;background:#fff;border-top:1px solid #363636;border-left:1px solid #363636;border-right:1px solid #363636;border-bottom:2px solid #8e8e8e;box-sizing:border-box;"></div>
<div style="left:678px;top:274px;width:75px;height:14px;background:#d6d6d6;border-top:1px solid #363636;border-left:1px solid #363636;border-right:1px solid #363636;border-bottom:2px solid #8e8e8e;box-sizing:border-box;"></div>
<div style="left:678px;top:289px;width:14px;height:14px;background:#fff;border-top:1px solid #363636;border-left:1px solid #363636;border-right:1px solid #363636;border-bottom:2px solid #8e8e8e;box-sizing:border-box;"><span class="t" style="left:0px;top:0px;line-height:12px;font-size:9px;color:#000">2</span></div>
<div class="t" style="right:28px;top:290px;height:13px;line-height:13px;font-size:9.3px;color:#000;font-weight:normal;text-align:right;">Children</div>
<div style="left:739px;top:289px;width:14px;height:14px;background:#fff;border-top:1px solid #363636;border-left:1px solid #363636;border-right:1px solid #363636;border-bottom:2px solid #8e8e8e;box-sizing:border-box;"><span class="t" style="left:0px;top:0px;line-height:12px;font-size:9px;color:#000">1</span></div>
<div style="left:678px;top:304px;width:34px;height:14px;background:#fff;border-top:1px solid #363636;border-left:1px solid #363636;border-right:1px solid #363636;border-bottom:2px solid #8e8e8e;box-sizing:border-box;"></div>
<div style="left:567px;top:335px;width:94px;height:17px;background:#d6d6d6;box-sizing:border-box;border-top:1px solid #fff;border-left:1px solid #fff;border-right:1px solid #404040;border-bottom:1px solid #404040;box-shadow:inset -1px -1px 0 #808080;"><div class="t" style="left:0;top:0;width:100%;height:100%;line-height:17px;text-align:center;font-size:9.3px;color:#000">Check-<u>I</u>n Guest</div></div>
<div style="left:662px;top:335px;width:94px;height:17px;background:#d6d6d6;box-sizing:border-box;border-top:1px solid #fff;border-left:1px solid #fff;border-right:1px solid #404040;border-bottom:1px solid #404040;box-shadow:inset -1px -1px 0 #808080;"><div class="t" style="left:0;top:0;width:100%;height:100%;line-height:17px;text-align:center;font-size:9.3px;color:#000"><u>R</u>eservation</div></div>
<div style="left:256px;top:356px;width:250px;height:18px;background:#4040bf;border-right:1px solid #303040;border-bottom:1px solid #303040;"></div>
<div class="t" style="left:263px;top:355px;height:18px;line-height:18px;font-size:12px;color:#fff;font-weight:bold;">Additional Information</div>
<div style="left:255px;top:374px;width:252px;height:140px;border:1px solid;border-color:#fff #7c7c7c #7c7c7c #fff;box-shadow:inset 1px 1px 0 #7c7c7c, inset -1px -1px 0 #fff;"></div>
<div style="left:258px;top:377px;width:74px;height:11px;background:#e20a0a;border:1px solid #a00000;border-top-color:#ff6060;border-left-color:#ff6060;"></div>
<div class="t" style="left:258px;top:377px;width:74px;height:11px;line-height:11px;font-size:8.7px;color:#fff;font-weight:bold;text-align:center;">Preferences</div>
<div style="left:335px;top:377px;width:73px;height:11px;background:#e20a0a;border:1px solid #a00000;border-top-color:#ff6060;border-left-color:#ff6060;"></div>
<div class="t" style="left:335px;top:377px;width:73px;height:11px;line-height:11px;font-size:8.7px;color:#fff;font-weight:bold;text-align:center;">Member</div>
<div style="left:411px;top:377px;width:75px;height:11px;background:#e20a0a;border:1px solid #a00000;border-top-color:#ff6060;border-left-color:#ff6060;"></div>
<div class="t" style="left:411px;top:377px;width:75px;height:11px;line-height:11px;font-size:8.7px;color:#fff;font-weight:bold;text-align:center;">No Post</div>
<div style="left:258px;top:390px;width:74px;height:11px;background:#e20a0a;border:1px solid #a00000;border-top-color:#ff6060;border-left-color:#ff6060;"></div>
<div class="t" style="left:258px;top:390px;width:74px;height:11px;line-height:11px;font-size:8.7px;color:#fff;font-weight:bold;text-align:center;">Attachments</div>
<div style="left:406px;top:493px;width:94px;height:17px;background:#d6d6d6;box-sizing:border-box;border-top:1px solid #fff;border-left:1px solid #fff;border-right:1px solid #404040;border-bottom:1px solid #404040;box-shadow:inset -1px -1px 0 #808080;"><div class="t" style="left:0;top:0;width:100%;height:100%;line-height:17px;text-align:center;font-size:9.3px;color:#000">Reservation Option<u>s</u></div></div>
<div style="left:506px;top:356px;width:252px;height:18px;background:#4040bf;border-right:1px solid #303040;border-bottom:1px solid #303040;"></div>
<div class="t" style="left:513px;top:355px;height:18px;line-height:18px;font-size:12px;color:#fff;font-weight:bold;">Cashiering</div>
<div style="left:506px;top:374px;width:253px;height:140px;border:1px solid;border-color:#fff #7c7c7c #7c7c7c #fff;box-shadow:inset 1px 1px 0 #7c7c7c, inset -1px -1px 0 #fff;"></div>
<div class="t" style="right:214px;top:377px;height:14px;line-height:14px;font-size:9px;color:#000;font-weight:bold;text-align:right;">Balance</div>
<div style="left:554px;top:377px;width:75px;height:15px;background:#fff;border-top:1px solid #363636;border-left:1px solid #363636;border-right:1px solid #363636;border-bottom:2px solid #8e8e8e;box-sizing:border-box;"><span class="t" style="right:1px;top:0px;line-height:13px;font-size:9px;color:#000">0.00</span></div>
<div class="t" style="right:89px;top:377px;height:14px;line-height:14px;font-size:9px;color:#000;font-weight:bold;text-align:right;">Comp</div>
<div style="left:678px;top:377px;width:75px;height:15px;background:#fff;border-top:1px solid #363636;border-left:1px solid #363636;border-right:1px solid #363636;border-bottom:2px solid #8e8e8e;box-sizing:border-box;"><span class="t" style="right:1px;top:0px;line-height:13px;font-size:9px;color:#000">0.00</span></div>
<div class="t" style="right:214px;top:411px;height:14px;line-height:14px;font-size:9.3px;color:#000;font-weight:normal;text-align:right;">Window 1</div>
<div style="left:554px;top:410px;width:75px;height:14px;background:#fff;border-top:1px solid #363636;border-left:1px solid #363636;border-right:1px solid #363636;border-bottom:2px solid #8e8e8e;box-sizing:border-box;"><span class="t" style="right:1px;top:0px;line-height:12px;font-size:9px;color:#000">0.00</span></div>
<div class="t" style="right:89px;top:411px;height:14px;line-height:14px;font-size:9.3px;color:#000;font-weight:normal;text-align:right;">101</div>
<div style="left:678px;top:410px;width:75px;height:14px;background:#fff;border-top:1px solid #363636;border-left:1px solid #363636;border-right:1px solid #363636;border-bottom:2px solid #8e8e8e;box-sizing:border-box;"><span class="t" style="right:1px;top:0px;line-height:12px;font-size:9px;color:#000">0.00</span></div>
<div class="t" style="right:214px;top:427px;height:14px;line-height:14px;font-size:9.3px;color:#000;font-weight:normal;text-align:right;">Window 2</div>
<div style="left:554px;top:426px;width:75px;height:14px;background:#fff;border-top:1px solid #363636;border-left:1px solid #363636;border-right:1px solid #363636;border-bottom:2px solid #8e8e8e;box-sizing:border-box;"><span class="t" style="right:1px;top:0px;line-height:12px;font-size:9px;color:#000">0.00</span></div>
<div class="t" style="right:89px;top:427px;height:14px;line-height:14px;font-size:9.3px;color:#000;font-weight:normal;text-align:right;">102</div>
<div style="left:678px;top:426px;width:75px;height:14px;background:#fff;border-top:1px solid #363636;border-left:1px solid #363636;border-right:1px solid #363636;border-bottom:2px solid #8e8e8e;box-sizing:border-box;"><span class="t" style="right:1px;top:0px;line-height:12px;font-size:9px;color:#000">0.00</span></div>
<div class="t" style="right:214px;top:444px;height:14px;line-height:14px;font-size:9.3px;color:#000;font-weight:normal;text-align:right;">Window 3</div>
<div style="left:554px;top:443px;width:75px;height:14px;background:#fff;border-top:1px solid #363636;border-left:1px solid #363636;border-right:1px solid #363636;border-bottom:2px solid #8e8e8e;box-sizing:border-box;"><span class="t" style="right:1px;top:0px;line-height:12px;font-size:9px;color:#000">0.00</span></div>
<div class="t" style="right:89px;top:444px;height:14px;line-height:14px;font-size:9.3px;color:#000;font-weight:normal;text-align:right;">103</div>
<div style="left:678px;top:443px;width:75px;height:14px;background:#fff;border-top:1px solid #363636;border-left:1px solid #363636;border-right:1px solid #363636;border-bottom:2px solid #8e8e8e;box-sizing:border-box;"><span class="t" style="right:1px;top:0px;line-height:12px;font-size:9px;color:#000">0.00</span></div>
<div class="t" style="right:214px;top:461px;height:14px;line-height:14px;font-size:9.3px;color:#000;font-weight:normal;text-align:right;">Window 4</div>
<div style="left:554px;top:460px;width:75px;height:14px;background:#fff;border-top:1px solid #363636;border-left:1px solid #363636;border-right:1px solid #363636;border-bottom:2px solid #8e8e8e;box-sizing:border-box;"><span class="t" style="right:1px;top:0px;line-height:12px;font-size:9px;color:#000">0.00</span></div>
<div class="t" style="right:89px;top:461px;height:14px;line-height:14px;font-size:9.3px;color:#000;font-weight:normal;text-align:right;">104</div>
<div style="left:678px;top:460px;width:75px;height:14px;background:#fff;border-top:1px solid #363636;border-left:1px solid #363636;border-right:1px solid #363636;border-bottom:2px solid #8e8e8e;box-sizing:border-box;"><span class="t" style="right:1px;top:0px;line-height:12px;font-size:9px;color:#000">0.00</span></div>
<div style="left:661px;top:476px;width:94px;height:17px;background:#d6d6d6;box-sizing:border-box;border-top:1px solid #fff;border-left:1px solid #fff;border-right:1px solid #404040;border-bottom:1px solid #404040;box-shadow:inset -1px -1px 0 #808080;"><div class="t" style="left:0;top:0;width:100%;height:100%;line-height:17px;text-align:center;font-size:9.3px;color:#a0a0a0">Billing</div></div>
<div style="left:661px;top:493px;width:94px;height:18px;background:#d6d6d6;box-sizing:border-box;border-top:1px solid #fff;border-left:1px solid #fff;border-right:1px solid #404040;border-bottom:1px solid #404040;box-shadow:inset -1px -1px 0 #808080;"><div class="t" style="left:0;top:0;width:100%;height:100%;line-height:18px;text-align:center;font-size:9.3px;color:#000"><u>C</u>lose</div></div>
</body></html>
